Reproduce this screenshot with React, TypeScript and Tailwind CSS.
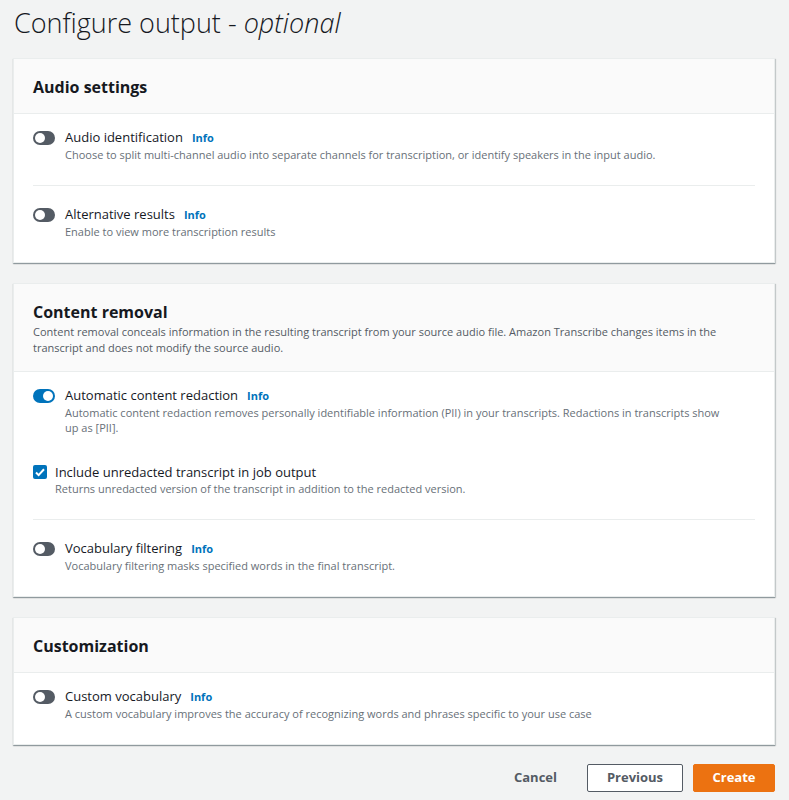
import { FC, ReactNode } from 'react';

const font = { fontFamily: '"Open Sans", "Noto Sans", sans-serif' };

const Toggle: FC<{ on?: boolean }> = ({ on }) => (
  <span
    className={`relative mt-[3px] inline-flex h-[14px] w-[22px] shrink-0 rounded-full ${on ? 'bg-[#0073bb]' : 'bg-[#545b64]'}`}
  >
    <span
      className={`absolute top-[2px] h-[10px] w-[10px] rounded-full bg-white ${on ? 'left-[10px]' : 'left-[2px]'}`}
    />
  </span>
);

const Info = () => (
  <span className="ml-[9px] text-[11px] font-bold text-[#0073bb]">Info</span>
);

const ToggleRow: FC<{ label: string; desc: ReactNode; on?: boolean }> = ({ label, desc, on }) => (
  <div className="flex gap-[10px]">
    <Toggle on={on} />
    <div className="pr-[24px]">
      <div className="flex items-baseline text-[13px] leading-[18px] text-[#16191f]">
        {label}
        <Info />
      </div>
      <p className="text-[11px] leading-[15px] text-[#687078]">{desc}</p>
    </div>
  </div>
);

const Divider = () => <div className="mt-[23px] mb-[19px] h-px bg-[#eaeded]" />;

const Card: FC<{ title: string; desc?: string; children: ReactNode }> = ({ title, desc, children }) => (
  <section className="border border-[#eaeded] bg-white shadow-[0_1px_1px_0_rgba(0,28,36,0.3),1px_1px_1px_0_rgba(0,28,36,0.15)]">
    <header className="border-b border-[#eaeded] bg-[#fafafa] px-[19px] pt-[17px] pb-[15px]">
      <h2 className="text-[16px] leading-[22px] font-bold text-[#16191f]">{title}</h2>
      {desc && <p className="mt-px text-[11px] leading-[16px] text-[#545b64]">{desc}</p>}
    </header>
    <div className="px-[19px] pt-[14px] pb-[23px]">{children}</div>
  </section>
);

export default function App() {
  return (
    <div style={font} className="min-h-[800px] w-[789px] bg-[#f2f3f3] px-[13px] pt-[5px]">
      <h1 className="pl-px text-[27px] leading-[36px] font-light text-[#16191f]">
        Configure output - <span className="italic">optional</span>
      </h1>

      <div className="mt-[17px] flex flex-col gap-[20px] pr-px">
        <Card title="Audio settings">
          <ToggleRow
            label="Audio identification"
            desc="Choose to split multi-channel audio into separate channels for transcription, or identify speakers in the input audio."
          />
          <Divider />
          <ToggleRow label="Alternative results" desc="Enable to view more transcription results" />
        </Card>

        <Card
          title="Content removal"
          desc="Content removal conceals information in the resulting transcript from your source audio file. Amazon Transcribe changes items in the transcript and does not modify the source audio."
        >
          <ToggleRow
            on
            label="Automatic content redaction"
            desc="Automatic content redaction removes personally identifiable information (PII) in your transcripts. Redactions in transcripts show up as [PII]."
          />
          <div className="mt-[28px] flex gap-[8px]">
            <span className="mt-[2px] flex h-[14px] w-[14px] shrink-0 items-center justify-center rounded-[2px] bg-[#0073bb]">
              <svg viewBox="0 0 14 14" className="h-[14px] w-[14px]" fill="none" stroke="white" strokeWidth={2}>
                <path d="M3 7.5l2.6 2.6L11 4.2" />
              </svg>
            </span>
            <div>
              <div className="text-[13px] leading-[18px] text-[#16191f]">Include unredacted transcript in job output</div>
              <p className="text-[11px] leading-[15px] text-[#687078]">
                Returns unredacted version of the transcript in addition to the redacted version.
              </p>
            </div>
          </div>
          <Divider />
          <ToggleRow label="Vocabulary filtering" desc="Vocabulary filtering masks specified words in the final transcript." />
        </Card>

        <Card title="Customization">
          <ToggleRow
            label="Custom vocabulary"
            desc="A custom vocabulary improves the accuracy of recognizing words and phrases specific to your use case"
          />
        </Card>
      </div>

      <div className="mt-[19px] flex items-center justify-end gap-[10px] pr-px">
        <button className="px-[20px] text-[13px] font-bold text-[#545b64]">Cancel</button>
        <button className="h-[28px] w-[96px] rounded-[2px] border border-[#545b64] bg-white text-[13px] font-bold text-[#545b64]">
          Previous
        </button>
        <button className="h-[28px] w-[82px] rounded-[2px] border border-[#ec7211] bg-[#ec7211] text-[13px] font-bold text-white">
          Create
        </button>
      </div>
    </div>
  );
}
